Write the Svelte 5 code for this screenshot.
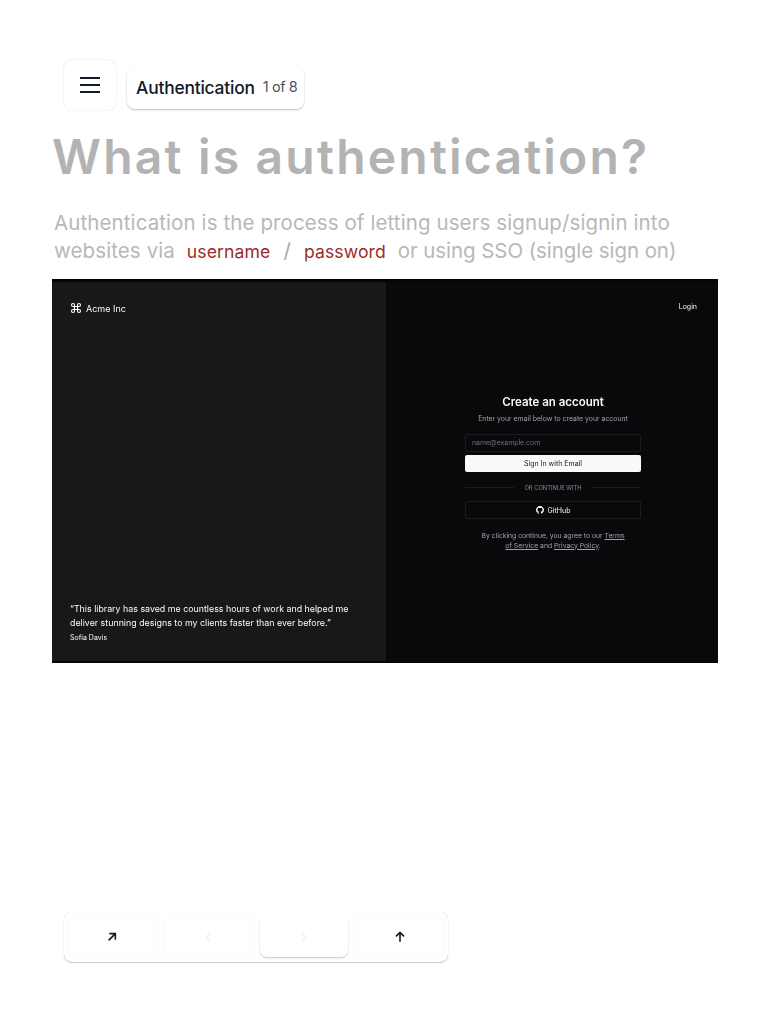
<script lang="ts">
	const tools = [
		{ key: 'open', d: 'M7 17 17 7M8 7h9v9', color: '#111827', raised: false },
		{ key: 'prev', d: 'M14 7l-5 5 5 5', color: '#f0f0f2', raised: false },
		{ key: 'next', d: 'M10 7l5 5-5 5', color: '#f0f0f2', raised: true },
		{ key: 'top', d: 'M12 19V5M6 11l6-6 6 6', color: '#111827', raised: false }
	];
</script>

<main class="page">
	<header class="topbar">
		<button class="menu" aria-label="Menu">
			<svg width="24" height="24" viewBox="0 0 24 24" fill="none" stroke="#111827" stroke-width="2">
				<path d="M2 5h20M2 12h20M2 19h20" />
			</svg>
		</button>
		<div class="crumb">
			<span class="crumb-title">Authentication</span>
			<span class="crumb-count">1 of 8</span>
		</div>
	</header>

	<h1>What is authentication?</h1>

	<p class="lead">
		Authentication is the process of letting users signup/signin into<br />
		websites via <em class="first">username</em><span class="slash">/</span><em>password</em> <span class="tail">or using SSO (single sign on)</span>
	</p>

	<section class="shot">
		<div class="brand-panel">
			<div class="brand">
				<svg width="12" height="12" viewBox="0 0 24 24" fill="none" stroke="#fff" stroke-width="2.2">
					<path d="M15 6v12a3 3 0 1 0 3-3H6a3 3 0 1 0 3 3V6a3 3 0 1 0-3 3h12a3 3 0 1 0-3-3" />
				</svg>
				<span>Acme Inc</span>
			</div>
			<blockquote>
				<p>“This library has saved me countless hours of work and helped me deliver stunning designs to my clients faster than ever before.”</p>
				<cite>Sofia Davis</cite>
			</blockquote>
		</div>
		<div class="form-panel">
			<a class="login" href="#login">Login</a>
			<div class="form">
				<h2>Create an account</h2>
				<p class="hint">Enter your email below to create your account</p>
				<div class="input">name@example.com</div>
				<button class="primary">Sign In with Email</button>
				<div class="divider"><span>OR CONTINUE WITH</span></div>
				<button class="github">
					<svg width="8" height="8" viewBox="0 0 16 16" fill="#fff">
						<path d="M8 0C3.58 0 0 3.58 0 8c0 3.54 2.29 6.53 5.47 7.59.4.07.55-.17.55-.38 0-.19-.01-.82-.01-1.49-2.01.37-2.53-.49-2.69-.94-.09-.23-.48-.94-.82-1.13-.28-.15-.68-.52-.01-.53.63-.01 1.08.58 1.23.82.72 1.21 1.87.87 2.33.66.07-.52.28-.87.51-1.07-1.78-.2-3.64-.89-3.64-3.95 0-.87.31-1.59.82-2.15-.08-.2-.36-1.02.08-2.12 0 0 .67-.21 2.2.82.64-.18 1.32-.27 2-.27s1.36.09 2 .27c1.53-1.04 2.2-.82 2.2-.82.44 1.1.16 1.92.08 2.12.51.56.82 1.27.82 2.15 0 3.07-1.87 3.75-3.65 3.95.29.25.54.73.54 1.48 0 1.07-.01 1.93-.01 2.2 0 .21.15.46.55.38A8.01 8.01 0 0 0 16 8c0-4.42-3.58-8-8-8z" />
					</svg>
					GitHub
				</button>
				<p class="terms">
					By clicking continue, you agree to our <u>Terms</u> <u>of Service</u> and <u>Privacy Policy</u>.
				</p>
			</div>
		</div>
	</section>

	<nav class="toolbar" aria-label="Slide controls">
		{#each tools as tool (tool.key)}
			<button class="tool" class:raised={tool.raised} aria-label={tool.key}>
				<svg width="16" height="16" viewBox="0 0 24 24" fill="none" stroke={tool.color} stroke-width="2.4">
					<path d={tool.d} />
				</svg>
			</button>
		{/each}
	</nav>
</main>

<style>
	:global(body) {
		margin: 0;
		background: #fff;
	}

	.page {
		height: 1024px;
		box-sizing: border-box;
		padding: 60px 50px 0 52px;
		font-family: Inter, 'Liberation Sans', sans-serif;
		overflow: hidden;
	}

	button {
		font-family: inherit;
		border: none;
		padding: 0;
		cursor: pointer;
	}

	.topbar {
		display: flex;
		align-items: flex-start;
		gap: 11px;
		padding-left: 12px;
		height: 50px;
	}

	.menu {
		width: 52px;
		height: 50px;
		display: grid;
		place-items: center;
		background: #fff;
		border-radius: 8px;
		box-shadow: 0 0 1.5px rgba(0, 0, 0, 0.2);
	}

	.crumb {
		margin-top: 7px;
		width: 177px;
		height: 42px;
		box-sizing: border-box;
		padding-left: 9px;
		display: flex;
		align-items: center;
		gap: 8px;
		border-radius: 8px;
		background: #fff;
		box-shadow: 0 1px 2px rgba(0, 0, 0, 0.26);
		white-space: nowrap;
	}

	.crumb-title {
		font-size: 17.4px;
		font-weight: 500;
		letter-spacing: -0.2px;
		color: #111827;
		margin-top: -2px;
	}

	.crumb-count {
		font-size: 14.5px;
		letter-spacing: -0.4px;
		color: #4b5563;
		margin-top: -3px;
	}

	h1 {
		margin: 18px 0 0;
		font-size: 48px;
		line-height: 58px;
		font-weight: 600;
		letter-spacing: 2.2px;
		color: #b3b3b3;
		white-space: nowrap;
	}

	.lead {
		margin: 23px 0 0 2px;
		font-size: 20.5px;
		line-height: 28px;
		color: #b8b8b8;
		white-space: nowrap;
		letter-spacing: 0.1px;
	}

	.lead em {
		font-style: normal;
		font-size: 17.6px;
		color: #9b2c2c;
		margin-right: 6px;
	}

	.lead em.first {
		margin-left: 6px;
		margin-right: 0;
	}

	.tail {
		letter-spacing: -0.07px;
	}

	.slash {
		margin: 0 13px;
		color: #a8a8a8;
	}

	.shot {
		margin-top: 13px;
		width: 666px;
		height: 384px;
		box-sizing: border-box;
		border-top: 3px solid #050505;
		border-bottom: 2px solid #050505;
		display: grid;
		grid-template-columns: 334px 332px;
		color: #fafafa;
		/* the reference shows this part as a scaled down image */
		filter: blur(0.3px);
	}

	.brand-panel {
		background: #18181b;
		padding: 20px 18px 18px;
		display: flex;
		flex-direction: column;
		justify-content: space-between;
	}

	.brand {
		display: flex;
		align-items: center;
		gap: 4px;
		font-size: 9px;
		height: 12px;
	}

	blockquote {
		margin: 0;
	}

	blockquote p {
		margin: 0;
		font-size: 8.85px;
		line-height: 13.5px;
		width: 290px;
	}

	cite {
		display: block;
		margin-top: 4px;
		font-style: normal;
		font-size: 7px;
		line-height: 10px;
	}

	.form-panel {
		position: relative;
		background: #09090b;
		display: flex;
		justify-content: center;
		padding-top: 113px;
	}

	.login {
		position: absolute;
		top: 20px;
		right: 21px;
		font-size: 7px;
		line-height: 10px;
		color: #fafafa;
		text-decoration: none;
	}

	.form {
		width: 176px;
		margin-left: 2px;
		display: flex;
		flex-direction: column;
		align-items: stretch;
		text-align: center;
	}

	h2 {
		margin: 0;
		font-size: 11.5px;
		line-height: 14px;
		font-weight: 600;
	}

	.hint {
		margin: 5px 0 0;
		font-size: 6.9px;
		line-height: 10px;
		color: #a1a1aa;
	}

	.input {
		margin-top: 10px;
		height: 18px;
		box-sizing: border-box;
		border: 1px solid #1c1c1f;
		border-radius: 2px;
		padding-left: 6px;
		font-size: 6.9px;
		line-height: 16px;
		color: #71717a;
		text-align: left;
	}

	.primary {
		margin-top: 3px;
		height: 17px;
		border-radius: 2px;
		background: #fafafa;
		color: #18181b;
		font-size: 7px;
	}

	.divider {
		margin-top: 10px;
		height: 10px;
		display: flex;
		align-items: center;
		gap: 10px;
		font-size: 5.8px;
		color: #8a8a92;
	}

	.divider::before,
	.divider::after {
		content: '';
		flex: 1;
		height: 1px;
		background: #1c1c1f;
	}

	.github {
		margin-top: 9px;
		height: 18px;
		display: flex;
		align-items: center;
		justify-content: center;
		gap: 4px;
		background: transparent;
		border: 1px solid #1c1c1f;
		border-radius: 2px;
		color: #fafafa;
		font-size: 7px;
	}

	.terms {
		margin: 12px auto 0;
		width: 148px;
		font-size: 6.8px;
		line-height: 9.5px;
		color: #a1a1aa;
	}

	.toolbar {
		margin: 249px 0 0 12px;
		width: 384px;
		height: 50px;
		box-sizing: border-box;
		padding: 4px;
		display: grid;
		grid-template-columns: repeat(4, 1fr);
		gap: 7px;
		background: #fff;
		border-radius: 8px;
		box-shadow: 0 0 1px rgba(0, 0, 0, 0.18), 0 1px 1px rgba(0, 0, 0, 0.2);
	}

	.tool {
		display: grid;
		place-items: center;
		height: 41px;
		background: #fff;
		border-radius: 7px;
		box-shadow: 0 0 2px rgba(0, 0, 0, 0.08);
	}

	.tool.raised {
		box-shadow: 0 1px 2px rgba(0, 0, 0, 0.22);
	}
</style>
